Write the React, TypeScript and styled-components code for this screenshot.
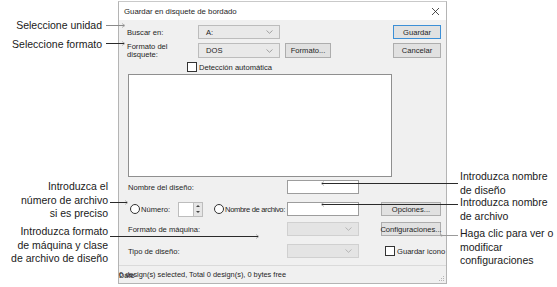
import React from 'react';
import styled, {createGlobalStyle} from 'styled-components';

const GlobalStyle = createGlobalStyle`
  html, body {
    margin: 0;
    padding: 0;
    background: #fff;
  }
  body {
    width: 557px;
    height: 287px;
    overflow: hidden;
    font-family: "Liberation Sans", Arial, sans-serif;
  }
`;

const Page = styled.div`
  position: relative;
  width: 557px;
  height: 287px;
  box-sizing: border-box;
  padding: 1px 0 0 118px;
`;

const Dialog = styled.div`
  width: 329px;
  height: 283px;
  box-sizing: border-box;
  border: 1px solid #b4b4b4;
  border-top-color: #c9c9c9;
  background: #f0f0f0;
  display: flex;
  flex-direction: column;
  font-size: 7.6px;
  color: #1e1e1e;
`;

const TitleBar = styled.div`
  height: 18px;
  flex: none;
  background: #fff;
  display: flex;
  align-items: center;
  justify-content: space-between;
  padding: 0 7px 0 5px;
  font-size: 7.8px;
`;

const Body = styled.div`
  flex: 1;
  display: flex;
  flex-direction: column;
  padding: 5px 5px 0 8px;
`;

const Row = styled.div<{$top?: number; $h?: number}>`
  display: flex;
  align-items: center;
  height: ${({$h}) => $h ?? 14}px;
  margin-top: ${({$top}) => $top ?? 0}px;
`;

const Label = styled.div<{$w?: number; $pl?: number}>`
  width: ${({$w}) => $w ?? 71}px;
  padding-left: ${({$pl}) => $pl ?? 0}px;
  box-sizing: border-box;
  flex: none;
  white-space: nowrap;
`;

const TwoLineLabel = styled(Label)`
  align-self: flex-start;
  line-height: 8.4px;
`;

const Combo = styled.div<{$w: number; $disabled?: boolean}>`
  width: ${({$w}) => $w}px;
  height: 100%;
  box-sizing: border-box;
  flex: none;
  display: flex;
  align-items: center;
  justify-content: space-between;
  padding: 0 6px 0 7px;
  background: ${({$disabled}) => ($disabled ? '#e4e4e4' : '#e9e9e9')};
  border: 1px solid ${({$disabled}) => ($disabled ? '#d0d0d0' : '#bcbcbc')};
  svg {
    stroke: ${({$disabled}) => ($disabled ? '#b0b0b0' : '#9a9a9a')};
  }
`;

const Button = styled.div<{$w: number; $default?: boolean; $ml?: number}>`
  width: ${({$w}) => $w}px;
  height: 100%;
  box-sizing: border-box;
  flex: none;
  margin-left: ${({$ml}) => ($ml === undefined ? 'auto' : `${$ml}px`)};
  display: flex;
  align-items: center;
  justify-content: center;
  background: #e1e1e1;
  border: 1px solid ${({$default}) => ($default ? '#3c8fd6' : '#adadad')};
  white-space: nowrap;
`;

const TextBox = styled.div<{$w: number}>`
  width: ${({$w}) => $w}px;
  height: 100%;
  box-sizing: border-box;
  flex: none;
  background: #fff;
  border: 1px solid #9d9d9d;
`;

const Check = styled.div<{$ml?: number}>`
  display: flex;
  align-items: center;
  gap: 2px;
  margin-left: ${({$ml}) => $ml ?? 0}px;
  white-space: nowrap;
  &::before {
    content: '';
    flex: none;
    width: 10px;
    height: 10px;
    box-sizing: border-box;
    border: 1px solid #333;
    background: #fff;
  }
`;

const Radio = styled.div<{$w?: number; $pl?: number; $tight?: boolean}>`
  display: flex;
  align-items: center;
  gap: 1px;
  width: ${({$w}) => ($w ? `${$w}px` : 'auto')};
  padding-left: ${({$pl}) => $pl ?? 0}px;
  box-sizing: border-box;
  flex: none;
  white-space: nowrap;
  letter-spacing: ${({$tight}) => ($tight ? '-0.35px' : '0')};
  &::before {
    content: '';
    flex: none;
    width: 10px;
    height: 10px;
    box-sizing: border-box;
    border: 1px solid #333;
    border-radius: 50%;
    background: #fff;
  }
`;

const Spinner = styled.div`
  width: 25px;
  height: 15px;
  flex: none;
  display: flex;
  margin-right: 11px;
`;

const SpinField = styled.div`
  flex: 1;
  background: #fff;
  border: 1px solid #bdbdbd;
  border-right: none;
`;

const SpinButtons = styled.div`
  width: 8px;
  display: flex;
  flex-direction: column;
  border: 1px solid #bdbdbd;
  background: #e6e6e6;
`;

const SpinArrow = styled.div<{$up?: boolean}>`
  flex: 1;
  display: flex;
  align-items: center;
  justify-content: center;
  &::after {
    content: '';
    border-left: 2px solid transparent;
    border-right: 2px solid transparent;
    ${({$up}) => ($up ? 'border-bottom: 2px solid #444;' : 'border-top: 2px solid #444;')}
  }
`;

const ListBox = styled.div`
  width: 264px;
  height: 103px;
  margin: 2px 0 0 1px;
  box-sizing: border-box;
  background: #fff;
  border: 1px solid #8f8f8f;
  flex: none;
`;

const StatusBar = styled.div`
  position: relative;
  height: 17px;
  flex: none;
  border-top: 1px solid #dadada;
  display: flex;
  align-items: center;
  white-space: nowrap;
  font-size: 7.4px;
`;

const StatusOverlap = styled.span`
  position: absolute;
  left: 0;
  top: 50%;
  transform: translateY(-50%);
`;

const Grip = styled.svg`
  position: absolute;
  right: 1px;
  bottom: 1px;
`;

const Callout = styled.div<{$x: number; $y: number; $right?: boolean}>`
  position: absolute;
  top: ${({$y}) => $y}px;
  ${({$x, $right}) => ($right ? `right: ${557 - $x}px; text-align: right;` : `left: ${$x}px;`)}
  font-size: 10.5px;
  line-height: 13.5px;
  color: #1a1a1a;
  white-space: nowrap;
`;

const Leaders = styled.svg`
  position: absolute;
  left: 0;
  top: 0;
  pointer-events: none;
`;

const Chevron = () => (
  <svg width="7" height="4" viewBox="0 0 7 4" fill="none" strokeWidth="0.9">
    <path d="M0.5 0.5 L3.5 3.3 L6.5 0.5" />
  </svg>
);

export default function App() {
  return (
    <>
      <GlobalStyle />
      <Page>
        <Dialog>
          <TitleBar>
            <span>Guardar en disquete de bordado</span>
            <svg width="7" height="7" viewBox="0 0 7 7" stroke="#222" strokeWidth="0.8">
              <path d="M0 0 L7 7 M7 0 L0 7" />
            </svg>
          </TitleBar>
          <Body>
            <Row>
              <Label>Buscar en:</Label>
              <Combo $w={82}>
                <span>A:</span>
                <Chevron />
              </Combo>
              <Button $w={48} $default>
                Guardar
              </Button>
            </Row>
            <Row $top={4} $h={15}>
              <TwoLineLabel>
                Formato del
                <br />
                disquete:
              </TwoLineLabel>
              <Combo $w={82}>
                <span>DOS</span>
                <Chevron />
              </Combo>
              <Button $w={46} $ml={5}>
                Formato...
              </Button>
              <Button $w={48}>Cancelar</Button>
            </Row>
            <Row $top={4} $h={10}>
              <Check $ml={60}>Detección automática</Check>
            </Row>
            <ListBox />
            <Row $top={3}>
              <Label $w={160} $pl={1}>
                Nombre del diseño:
              </Label>
              <TextBox $w={72} />
            </Row>
            <Row $top={8}>
              <Radio $w={51} $pl={3}>
                Número:
              </Radio>
              <Spinner>
                <SpinField />
                <SpinButtons>
                  <SpinArrow $up />
                  <SpinArrow />
                </SpinButtons>
              </Spinner>
              <Radio $w={73} $tight>
                Nombre de archivo:
              </Radio>
              <TextBox $w={72} />
              <Button $w={60} $ml={22}>
                Opciones...
              </Button>
            </Row>
            <Row $top={6}>
              <Label $w={160} $pl={1}>
                Formato de máquina:
              </Label>
              <Combo $w={72} $disabled>
                <span />
                <Chevron />
              </Combo>
              <Button $w={60} $ml={22}>
                Configuraciones...
              </Button>
            </Row>
            <Row $top={8}>
              <Label $w={160} $pl={1}>
                Tipo de diseño:
              </Label>
              <Combo $w={72} $disabled>
                <span />
                <Chevron />
              </Combo>
              <Check $ml={26}>Guardar icono</Check>
            </Row>
          </Body>
          <StatusBar>
            <span>0 design(s) selected, Total 0 design(s), 0 bytes free</span>
            <StatusOverlap>Date</StatusOverlap>
            <Grip width="6" height="6" viewBox="0 0 6 6" fill="#b5b5b5">
              <rect x="4" y="0" width="1" height="1" />
              <rect x="2" y="2" width="1" height="1" />
              <rect x="4" y="2" width="1" height="1" />
              <rect x="0" y="4" width="1" height="1" />
              <rect x="2" y="4" width="1" height="1" />
              <rect x="4" y="4" width="1" height="1" />
            </Grip>
          </StatusBar>
        </Dialog>

        <Callout $x={102} $y={19} $right>
          Seleccione unidad
        </Callout>
        <Callout $x={102} $y={38} $right>
          Seleccione formato
        </Callout>
        <Callout $x={108} $y={180} $right>
          Introduzca el
          <br />
          número de archivo
          <br />
          si es preciso
        </Callout>
        <Callout $x={108} $y={225} $right>
          Introduzca formato
          <br />
          de máquina y clase
          <br />
          de archivo de diseño
        </Callout>
        <Callout $x={460} $y={170}>
          Introduzca nombre
          <br />
          de diseño
        </Callout>
        <Callout $x={460} $y={196}>
          Introduzca nombre
          <br />
          de archivo
        </Callout>
        <Callout $x={460} $y={227}>
          Haga clic para ver o
          <br />
          modificar
          <br />
          configuraciones
        </Callout>

        <Leaders width="557" height="287" viewBox="0 0 557 287" fill="none" strokeWidth="1">
          <path d="M106 25.5 H124" stroke="#8a8a8a" />
          <path d="M122 23.5 L125 25.5 L122 27.5" stroke="#9a9a9a" strokeWidth="0.7" />
          <path d="M106 43.5 H124" stroke="#2a2a2a" />
          <path d="M122 41.5 L125 43.5 L122 45.5" stroke="#9a9a9a" strokeWidth="0.7" />
          <path d="M110 202.5 H127" stroke="#2a2a2a" />
          <path d="M125 200.5 L128 202.5 L125 204.5" stroke="#9a9a9a" strokeWidth="0.7" />
          <path d="M110 236.5 H258" stroke="#2a2a2a" />
          <path d="M256 234.5 L259 236.5 L256 238.5" stroke="#9a9a9a" strokeWidth="0.7" />
          <path d="M322 183.5 H458" stroke="#2a2a2a" />
          <path d="M324 181.5 L321 183.5 L324 185.5" stroke="#9a9a9a" strokeWidth="0.7" />
          <path d="M322 204.5 H458" stroke="#2a2a2a" />
          <path d="M324 202.5 L321 204.5 L324 206.5" stroke="#9a9a9a" strokeWidth="0.7" />
          <path d="M441 235.5 H458" stroke="#9a9a9a" />
          <circle cx="441.5" cy="235.5" r="1" fill="#9a9a9a" />
        </Leaders>
      </Page>
    </>
  );
}
